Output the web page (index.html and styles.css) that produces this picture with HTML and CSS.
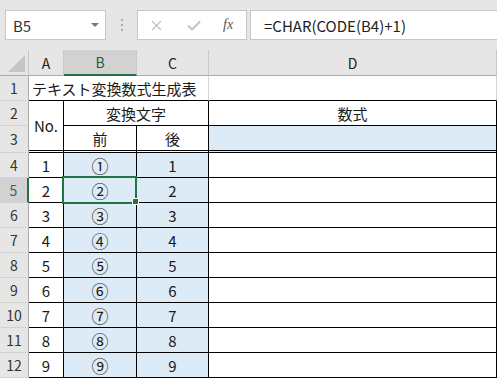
FILE: index.html
```html
<!DOCTYPE html>
<html lang="ja">
<head>
    <meta charset="UTF-8">
    <title>テキスト変換数式生成表</title>
    <link rel="stylesheet" href="styles.css">
</head>
<body>
    <!-- 数式バー -->
    <div class="bar">
        <div class="namebox">
            <span>B5</span>
            <span class="caret"></span>
        </div>
        <div class="grip"><i></i><i></i><i></i></div>
        <div class="fxbox">
            <svg class="icon-x" width="11" height="11" viewBox="0 0 11 11">
                <path d="M1 1L10 10M10 1L1 10" stroke="#c3c3c3" stroke-width="1.4" fill="none"/>
            </svg>
            <svg class="icon-ok" width="14" height="11" viewBox="0 0 14 11">
                <path d="M1 5.5L5 9.5L13 1.5" stroke="#c3c3c3" stroke-width="2" fill="none"/>
            </svg>
            <span class="fx">fx</span>
        </div>
        <div class="formula">=CHAR(CODE(B4)+1)</div>
    </div>

    <!-- シート -->
    <div class="sheet">
        <div class="ch corner">
            <svg width="28" height="25" viewBox="0 0 28 25">
                <path d="M8 22L25 22L25 5Z" fill="#c6c6c6"/>
            </svg>
        </div>
        <div class="ch">A</div>
        <div class="ch sel">B</div>
        <div class="ch">C</div>
        <div class="ch">D</div>

        <div class="rh">1</div>
        <div class="c title">テキスト変換数式生成表</div>
        <div class="c top"></div>

        <div class="rh">2</div>
        <div class="c b dbl no">No.</div>
        <div class="c b span2">変換文字</div>
        <div class="c b">数式</div>

        <div class="rh">3</div>
        <div class="c b dbl">前</div>
        <div class="c b dbl">後</div>
        <div class="c b dbl fill"></div>

        <div class="rh">4</div>
        <div class="c b">1</div>
        <div class="c b fill circ">①</div>
        <div class="c b fill">1</div>
        <div class="c b"></div>

        <div class="rh sel">5</div>
        <div class="c b">2</div>
        <div class="c b fill circ active">②</div>
        <div class="c b fill">2</div>
        <div class="c b"></div>

        <div class="rh">6</div>
        <div class="c b">3</div>
        <div class="c b fill circ">③</div>
        <div class="c b fill">3</div>
        <div class="c b"></div>

        <div class="rh">7</div>
        <div class="c b">4</div>
        <div class="c b fill circ">④</div>
        <div class="c b fill">4</div>
        <div class="c b"></div>

        <div class="rh">8</div>
        <div class="c b">5</div>
        <div class="c b fill circ">⑤</div>
        <div class="c b fill">5</div>
        <div class="c b"></div>

        <div class="rh">9</div>
        <div class="c b">6</div>
        <div class="c b fill circ">⑥</div>
        <div class="c b fill">6</div>
        <div class="c b"></div>

        <div class="rh">10</div>
        <div class="c b">7</div>
        <div class="c b fill circ">⑦</div>
        <div class="c b fill">7</div>
        <div class="c b"></div>

        <div class="rh">11</div>
        <div class="c b">8</div>
        <div class="c b fill circ">⑧</div>
        <div class="c b fill">8</div>
        <div class="c b"></div>

        <div class="rh">12</div>
        <div class="c b">9</div>
        <div class="c b fill circ">⑨</div>
        <div class="c b fill">9</div>
        <div class="c b"></div>
    </div>
</body>
</html>
```

FILE: styles.css
```css
*, *::before, *::after {
    box-sizing: border-box;
}
body {
    margin: 0;
    width: 497px;
    height: 378px;
    overflow: hidden;
    background: #ffffff;
    font-family: "Noto Sans CJK JP", "Noto Sans", sans-serif;
    font-size: 15px;
    color: #1a1a1a;
}

/* 数式バー */
.bar {
    height: 50px;
    background: #e6e6e6;
    display: flex;
    align-items: center;
    padding-left: 5px;
}
.bar > div {
    flex-shrink: 0;
}
.namebox {
    width: 101px;
    height: 30px;
    background: #ffffff;
    border: 1px solid #c6c6c6;
    display: flex;
    align-items: center;
    justify-content: space-between;
    padding: 0 6px 0 7px;
    color: #333;
}
.caret {
    width: 0;
    height: 0;
    border-left: 4px solid transparent;
    border-right: 4px solid transparent;
    border-top: 4px solid #777;
}
.grip {
    width: 31px;
    display: flex;
    flex-direction: column;
    align-items: center;
    gap: 3px;
}
.grip i {
    width: 2px;
    height: 2px;
    background: #a8a8a8;
}
.fxbox {
    width: 110px;
    height: 30px;
    background: #ffffff;
    border: 1px solid #c6c6c6;
    display: flex;
    align-items: center;
    padding-left: 13px;
}
.icon-ok {
    margin-left: 25px;
}
.fx {
    margin-left: 22px;
    font-family: "Liberation Serif", serif;
    font-style: italic;
    font-size: 14px;
    color: #555;
}
.formula {
    width: 260px;
    height: 30px;
    margin-left: 3px;
    background: #ffffff;
    border: 1px solid #c6c6c6;
    display: flex;
    align-items: center;
    padding-left: 13px;
    color: #222;
}

/* シート */
.sheet {
    display: grid;
    grid-template-columns: 29px 35px 73px 72px 288px;
    grid-template-rows: 26px 25px 25px 27px repeat(9, 25px);
}
.ch, .rh, .c {
    display: flex;
    align-items: center;
    justify-content: center;
    border-right: 1px solid #d4d4d4;
    border-bottom: 1px solid #d4d4d4;
}
.ch {
    background: #e6e6e6;
    border-right-color: #c8c8c8;
    border-bottom-color: #ababab;
    color: #222;
    font-size: 14px;
}
.ch.corner {
    padding: 0;
}
.ch.sel {
    background: #d2d2d2;
    color: #1e5e3a;
    border-bottom: 2px solid #217346;
}
.rh {
    background: #e6e6e6;
    border-right-color: #ababab;
    border-bottom-color: #d2d2d2;
    color: #333;
    font-size: 14px;
}
.rh.sel {
    background: #d2d2d2;
    color: #217346;
    border-right: 2px solid #217346;
}
.c.title {
    grid-column: span 3;
    justify-content: flex-start;
    padding-left: 3px;
    border-bottom-color: #000;
}
.c.top {
    border-bottom-color: #000;
}
.c.b {
    border-right-color: #000;
    border-bottom-color: #000;
}
.c.dbl {
    border-bottom: 3px double #000;
}
.c.no {
    grid-row: span 2;
}
.c.span2 {
    grid-column: span 2;
}
.c.fill {
    background: #ddebf7;
}
.c.circ {
    font-size: 17px;
}
.c.active {
    position: relative;
}
.c.active::before {
    content: "";
    position: absolute;
    left: -2px;
    top: -2px;
    width: 75px;
    height: 28px;
    border: 2px solid #217346;
}
.c.active::after {
    content: "";
    position: absolute;
    left: 68px;
    top: 20px;
    width: 7px;
    height: 7px;
    background: #217346;
    border: 1px solid #ffffff;
}
```
